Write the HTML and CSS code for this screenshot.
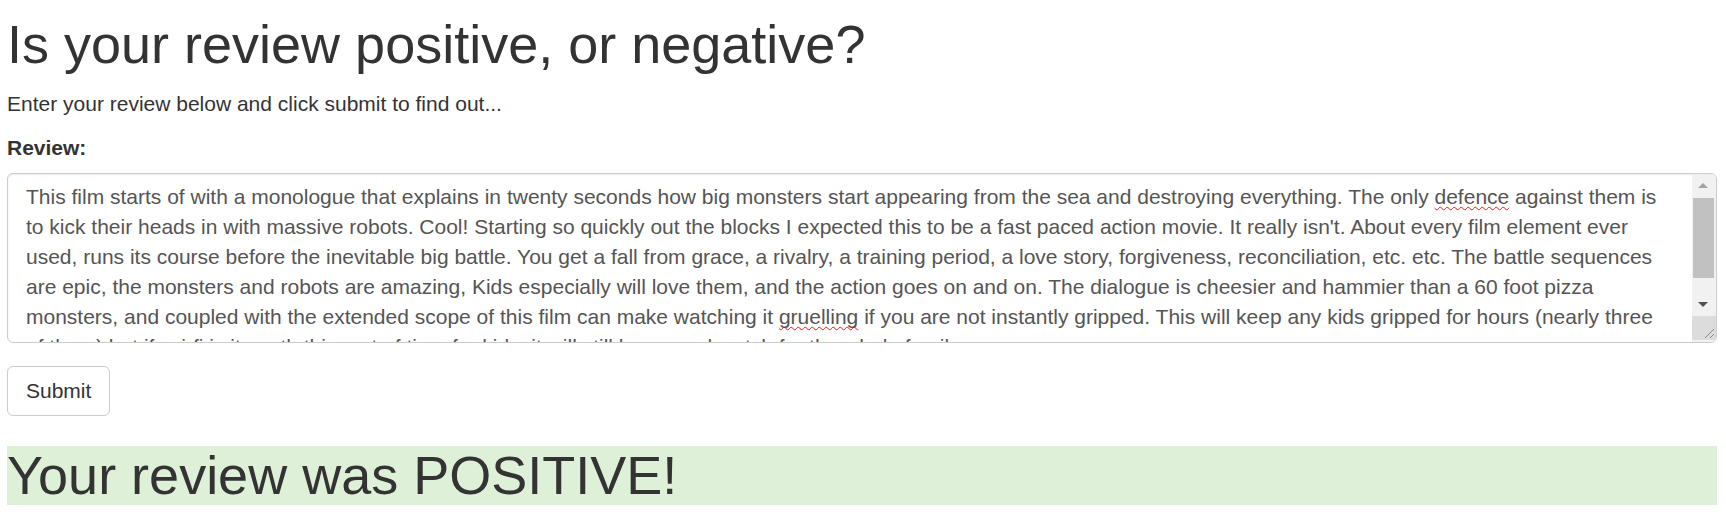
FILE: index.html
```html
<!DOCTYPE html>
<html lang="en">
<head>
<meta charset="utf-8">
<title>Sentiment Analysis</title>
<link rel="stylesheet" href="styles.css">
</head>
<body>
<main class="page">
  <h1 class="title">Is your review positive, or negative?</h1>
  <p class="intro">Enter your review below and click submit to find out...</p>
  <form class="review-form">
    <label class="field-label">Review:</label>
    <div class="review-box">
      <div class="review-text" role="textbox" aria-multiline="true">This film starts of with a monologue that explains in twenty seconds how big monsters start appearing from the sea and destroying everything. The only <span class="misspelt">defence</span> against them is to kick their heads in with massive robots. Cool! Starting so quickly out the blocks I expected this to be a fast paced action movie. It really isn't. About every film element ever used, runs its course before the inevitable big battle. You get a fall from grace, a rivalry, a training period, a love story, forgiveness, reconciliation, etc. etc. The battle sequences are epic, the monsters and robots are amazing, Kids especially will love them, and the action goes on and on. The dialogue is cheesier and hammier than a 60 foot pizza monsters, and coupled with the extended scope of this film can make watching it <span class="misspelt">gruelling</span> if you are not instantly gripped. This will keep any kids gripped for hours (nearly three of them) but if sci-fi is it worth this sort of time for kids, it will still be a good watch for the whole family.</div>
      <div class="scrollbar">
        <div class="sb-btn sb-up"><span class="arrow-up"></span></div>
        <div class="sb-thumb"></div>
        <div class="sb-space"></div>
        <div class="sb-btn sb-down"><span class="arrow-down"></span></div>
        <div class="resizer">
          <svg width="24" height="24" viewBox="0 0 24 24"><path d="M22 13 L13 22 M22 18 L18 22" stroke="#8a8a8a" stroke-width="1" fill="none"/></svg>
        </div>
      </div>
    </div>
    <button type="button" class="btn">Submit</button>
  </form>
  <h1 class="result">Your review was POSITIVE!</h1>
</main>
</body>
</html>
```
FILE: styles.css
```css
html, body {
  margin: 0;
  padding: 0;
  background: #fff;
}
body {
  font-family: "Liberation Sans", Arial, Helvetica, sans-serif;
  color: #333;
  font-size: 21px;
  line-height: 30px;
}
.page {
  padding: 0 9px 0 7px;
  display: flex;
  flex-direction: column;
  align-items: flex-start;
}
.title {
  margin: 15px 0 15px;
  font-size: 54px;
  line-height: 59px;
  font-weight: normal;
}
.intro {
  margin: 0 0 14px;
}
.review-form {
  align-self: stretch;
  display: flex;
  flex-direction: column;
  align-items: flex-start;
}
.field-label {
  font-weight: bold;
  margin: 0 0 10px;
}
.review-box {
  align-self: stretch;
  box-sizing: border-box;
  height: 170px;
  border: 1px solid #ccc;
  border-radius: 6px;
  display: flex;
  overflow: hidden;
  background: #fff;
  box-shadow: inset 0 1px 2px rgba(0,0,0,0.075);
}
.review-text {
  flex: 1;
  padding: 8px 18px 0 18px;
  color: #555;
  overflow: hidden;
}
.misspelt {
  text-decoration: underline wavy #e02020;
  text-decoration-thickness: 1px;
  text-decoration-skip-ink: none;
  text-underline-offset: 2px;
}
.scrollbar {
  width: 24px;
  display: flex;
  flex-direction: column;
  background: #f1f1f1;
}
.sb-btn {
  height: 23px;
  display: flex;
  align-items: center;
  justify-content: center;
  padding-right: 2px;
}
.arrow-up {
  width: 0;
  height: 0;
  border-left: 5px solid transparent;
  border-right: 5px solid transparent;
  border-bottom: 5px solid #a3a3a3;
}
.arrow-down {
  width: 0;
  height: 0;
  border-left: 5px solid transparent;
  border-right: 5px solid transparent;
  border-top: 5px solid #505050;
}
.sb-thumb {
  height: 80px;
  margin: 1px 2px 0 1px;
  background: #c1c1c1;
}
.sb-space {
  flex: 1;
}
.resizer {
  height: 24px;
  background: #dcdcdc;
  margin-bottom: 2px;
}
.resizer svg {
  display: block;
}
.btn {
  margin-top: 23px;
  font-family: inherit;
  font-size: 21px;
  line-height: 30px;
  color: #333;
  background: #fff;
  border: 1px solid #ccc;
  border-radius: 6px;
  padding: 9px 18px;
  cursor: pointer;
}
.result {
  align-self: stretch;
  margin: 30px 0 0;
  font-size: 54px;
  line-height: 59px;
  font-weight: normal;
  background: #dff0d8;
  color: #333;
}
```
